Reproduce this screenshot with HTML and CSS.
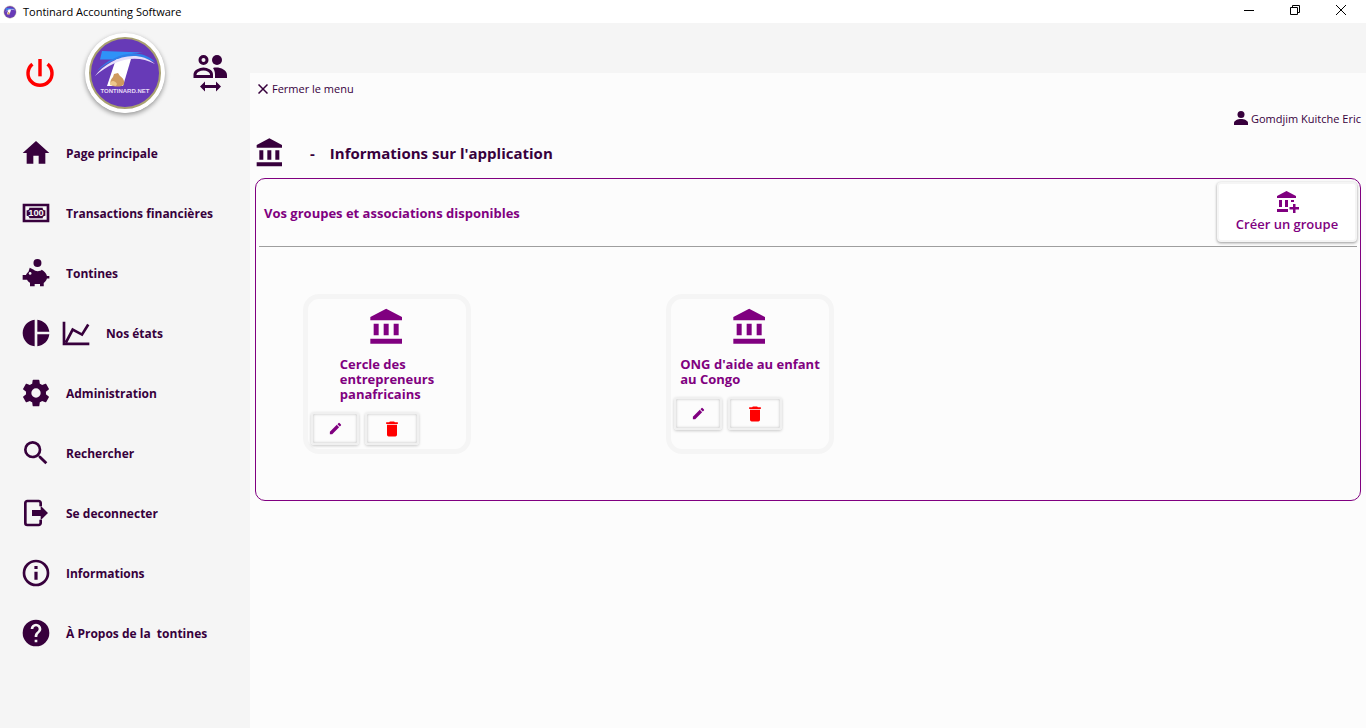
FILE: index.html
```
<!DOCTYPE html>
<html lang="fr">

<head>
    <meta charset="UTF-8">
    <meta name="viewport" content="width=device-width, initial-scale=1.0">
    <title>Tontinard Accounting Software</title>
    <link rel="stylesheet" href="styles.css">
</head>

<body>
    <!-- symboles partagés -->
    <svg class="symbols" aria-hidden="true">
        <symbol id="logo" viewBox="0 0 80 80">
            <circle cx="40" cy="40" r="40" fill="#fff" />
            <circle cx="40" cy="40" r="35" fill="#673ab7" stroke="#a8a070" stroke-width="2" />
            <path d="M17 18L58 19.500C49 20 40 22 32 26.500H15z" fill="#2f92f8" />
            <path d="M31 26h15l-8 27H22z" fill="#fff" />
            <path d="M12 38C26 22 54 13 70 29C52 20 30 22 12 38z" fill="#2f7fe8" />
            <path d="M10 43C22 27 50 14 70 31C50 20 28 27 10 43z" fill="#e6dffa" />
            <path d="M29 41l4-1 2 3c3 2 5 5 4 8-1 3-8 3-11 2-4-2-3-6 0-9z" fill="#cf9a5e" />
            <path d="M25 52c0-4 4-6 7-1l-1 2z" fill="#edc88c" />
        </symbol>
        <symbol id="bank" viewBox="0 0 24 24">
            <path d="M11.500 1L2 6v2h19V6zM16 10v7h3v-7zM2 22h19v-3H2zM10 10v7h3v-7zM4 10v7h3v-7z" />
        </symbol>
        <symbol id="pencil" viewBox="0 0 24 24">
            <path d="M3 17.250V21h3.750L17.810 9.940l-3.750-3.750zM20.710 7.040a1 1 0 0 0 0-1.410l-2.340-2.340a1 1 0 0 0-1.410 0l-1.830 1.830 3.750 3.750z" />
        </symbol>
        <symbol id="trash" viewBox="0 0 24 24">
            <path d="M6 19a2 2 0 0 0 2 2h8a2 2 0 0 0 2-2V7H6zM19 4h-3.500l-1-1h-5l-1 1H5v2h14z" />
        </symbol>
    </svg>

    <header class="titlebar">
        <svg class="titlebar-logo"><use href="#logo" /></svg>
        <span class="titlebar-name">Tontinard Accounting Software</span>
        <div class="window-btns">
            <button aria-label="Réduire"><svg viewBox="0 0 12 12"><path d="M1 6.500h10" /></svg></button>
            <button aria-label="Restaurer"><svg viewBox="0 0 12 12"><path d="M1.500 3.500h7v7h-7zM3.500 3V1.500h7v7H9" /></svg></button>
            <button aria-label="Fermer"><svg viewBox="0 0 12 12"><path d="M1 1l10 10M11 1L1 11" /></svg></button>
        </div>
    </header>

    <div class="app">
        <aside class="sidebar">
            <div class="brand">
                <button class="power" aria-label="Quitter">
                    <svg viewBox="0 0 24 24"><path d="M10.700 1.500h2.600v13h-2.600z" /><path d="M6.300 5.300a9 9 0 1 0 11.400 0" fill="none" stroke="red" stroke-width="2.600" /></svg>
                </button>
                <svg class="brand-logo" viewBox="0 0 80 80">
                    <use href="#logo" />
                    <text x="40" y="60" text-anchor="middle" class="logo-text">TONTINARD.NET</text>
                </svg>
                <button class="switch" aria-label="Changer de groupe">
                    <svg viewBox="0 0 34 38">
                        <circle cx="10.500" cy="6" r="3.500" fill="none" stroke="#37003c" stroke-width="3" />
                        <circle cx="24" cy="6" r="5" />
                        <path d="M2 22.500v-2c0-3.500 5-5.500 8.500-5.500s8 2 8 5.500v2z" fill="none" stroke="#37003c" stroke-width="3" />
                        <path d="M20 14c5-1.500 14 1 14 7v3H22v-3.500c0-3-1-5-2-6.500z" />
                        <path d="M7 32.500l5-5v3.500h11v-3.500l5 5-5 5V34H12v3.500z" />
                    </svg>
                </button>
            </div>

            <nav class="menu">
                <a href="#">
                    <svg viewBox="0 0 24 24"><path d="M10 20v-6h4v6h5v-8h3L12 3 2 12h3v8z" /></svg>
                    Page principale
                </a>
                <a href="#">
                    <svg viewBox="0 0 24 24">
                        <path d="M2 5h20v14H2zM4 7v10h16V7z" fill-rule="evenodd" />
                        <path d="M7 8h10a2 2 0 0 0 2 2v4a2 2 0 0 0-2 2H7a2 2 0 0 0-2-2v-4a2 2 0 0 0 2-2z" />
                        <text x="12" y="14.500" text-anchor="middle" class="bill-text">100</text>
                    </svg>
                    Transactions financières
                </a>
                <a href="#">
                    <svg viewBox="0 0 24 24">
                        <circle cx="13.100" cy="4.500" r="3" />
                        <path d="M7.300 8l3 1.600c.8 1.300 4.800 1.600 6 0 2 1 3.400 2.700 3.900 4.700H22v1.800h-1.800c-.5 1.500-1.200 2.500-2.400 3.400V22H15v-1.800h-4V22H7.500v-2.700c-1-.6-1.700-1.300-2.200-2.300H2v-3.500h2.500c.4-1 1-1.600 1.800-2.200z" />
                        <circle cx="7.600" cy="12.300" r="1" fill="#f5f5f5" />
                    </svg>
                    Tontines
                </a>
                <a href="#">
                    <svg viewBox="0 0 24 24"><path d="M11 2v20C5.900 21.500 2 17.200 2 12S5.900 2.500 11 2zM13 2v9h9c-.5-4.800-4.200-8.500-9-9zM13 13v9c4.700-.5 8.500-4.200 9-9z" /></svg>
                    <svg viewBox="0 0 24 24" class="second"><path d="M3 3.500V20.200H22M4.500 19L9.500 9.500l7 3.700L21.200 5.600" fill="none" stroke="#37003c" stroke-width="2" /></svg>
                    Nos états
                </a>
                <a href="#">
                    <svg viewBox="0 0 24 24"><path d="M12 15.500a3.500 3.500 0 1 1 0-7 3.500 3.500 0 0 1 0 7m7.430-2.530c.04-.32.07-.64.07-.97s-.03-.66-.07-1l2.110-1.630c.19-.15.24-.42.12-.64l-2-3.460c-.12-.22-.39-.31-.61-.22l-2.490 1c-.52-.39-1.060-.73-1.690-.98l-.37-2.650A.5.5 0 0 0 14 2h-4c-.25 0-.46.18-.5.42l-.37 2.650c-.63.25-1.170.59-1.690.98l-2.490-1c-.22-.09-.49 0-.61.22l-2 3.460c-.13.22-.07.49.12.64L4.570 11c-.04.34-.07.67-.07 1s.03.65.07.97l-2.110 1.660c-.19.15-.25.42-.12.64l2 3.460c.12.22.39.3.61.22l2.490-1.010c.52.4 1.060.74 1.690.99l.37 2.650c.04.24.25.42.5.42h4c.25 0 .46-.18.5-.42l.37-2.650c.63-.26 1.170-.59 1.690-.99l2.490 1.010c.22.08.49 0 .61-.22l2-3.460c.12-.22.07-.49-.12-.64z" /></svg>
                    Administration
                </a>
                <a href="#">
                    <svg viewBox="0 0 24 24"><path d="M15.500 14h-.79l-.28-.27A6.470 6.470 0 0 0 16 9.500 6.500 6.500 0 1 0 9.500 16c1.610 0 3.090-.59 4.230-1.570l.27.28v.79l5 4.990L20.490 19zm-6 0a4.500 4.500 0 1 1 0-9 4.500 4.500 0 0 1 0 9z" /></svg>
                    Rechercher
                </a>
                <a href="#">
                    <svg viewBox="0 0 24 24"><path d="M15.500 7V4.500A1.500 1.500 0 0 0 14 3H5.500A1.500 1.500 0 0 0 4 4.500v15A1.500 1.500 0 0 0 5.500 21H14a1.500 1.500 0 0 0 1.500-1.500V17" fill="none" stroke="#37003c" stroke-width="2" /><path d="M9 9.700h6.500V6.500L21 12l-5.500 5.500v-3.200H9z" /></svg>
                    Se deconnecter
                </a>
                <a href="#">
                    <svg viewBox="0 0 24 24"><path d="M10.800 17h2.400v-6h-2.400zM12 2a10 10 0 1 0 0 20 10 10 0 0 0 0-20zm0 18a8 8 0 1 1 0-16 8 8 0 0 1 0 16zM10.800 9h2.400V6.800h-2.400z" /></svg>
                    Informations
                </a>
                <a href="#">
                    <svg viewBox="0 0 24 24"><path d="M12 2a10 10 0 1 0 0 20 10 10 0 0 0 0-20zm1 17h-2v-2h2zm2.070-7.750l-.9.920C13.450 12.900 13 13.500 13 15h-2v-.5c0-1.100.45-2.100 1.170-2.830l1.240-1.260A2 2 0 1 0 10 9H8a4 4 0 1 1 8 0c0 .88-.36 1.680-.93 2.250z" /></svg>
                    À Propos de la&nbsp; tontines
                </a>
            </nav>
        </aside>

        <main class="content">
            <button class="close-menu">
                <svg viewBox="0 0 10 10"><path d="M.5.5l9 9M9.500.5l-9 9" /></svg>
                Fermer le menu
            </button>
            <div class="user">
                <svg viewBox="0 0 14 14"><circle cx="7" cy="3.500" r="3.500" /><path d="M0 14v-2c0-2.500 4-4 7-4s7 1.500 7 4v2z" /></svg>
                Gomdjim Kuitche Eric
            </div>

            <h1 class="page-title">
                <svg><use href="#bank" /></svg>
                <span class="dash">-</span>
                Informations sur l'application
            </h1>

            <section class="panel">
                <div class="panel-head">
                    <h2>Vos groupes et associations disponibles</h2>
                    <button class="create">
                        <svg viewBox="0 0 24 24"><path d="M11.500 1L2 6v2h19V6zM4 10v7h3v-7zM10 10v7h3v-7zM16 10v2h3v-2zM2 19v3h11v-3zM18 14h2.500v3H24v2.500h-3.500V23H18v-3.500h-3.500V17H18z" /></svg>
                        Créer un groupe
                    </button>
                </div>

                <div class="groups">
                    <article class="card">
                        <svg class="card-icon"><use href="#bank" /></svg>
                        <h3>Cercle des<br>entrepreneurs<br>panafricains</h3>
                        <div class="card-btns">
                            <button class="edit" aria-label="Modifier"><svg><use href="#pencil" /></svg></button>
                            <button class="delete" aria-label="Supprimer"><svg><use href="#trash" /></svg></button>
                        </div>
                    </article>
                    <article class="card">
                        <svg class="card-icon"><use href="#bank" /></svg>
                        <h3>ONG d'aide au enfant<br>au Congo</h3>
                        <div class="card-btns">
                            <button class="edit" aria-label="Modifier"><svg><use href="#pencil" /></svg></button>
                            <button class="delete" aria-label="Supprimer"><svg><use href="#trash" /></svg></button>
                        </div>
                    </article>
                </div>
            </section>
        </main>
    </div>
</body>

</html>
```
FILE: styles.css
```
* {
    margin: 0;
    padding: 0;
    box-sizing: border-box;
}

body {
    min-height: 100vh;
    display: flex;
    flex-direction: column;
    font-family: "Open Sans", "Noto Sans", sans-serif;
    font-size: 12px;
    color: #37003c;
    background-color: #f5f5f5;
}

button {
    border: 0;
    background: none;
    font-family: inherit;
    font-size: inherit;
    color: inherit;
    cursor: pointer;
}

svg {
    display: block;
    flex-shrink: 0;
    fill: currentColor;
}

.symbols {
    position: absolute;
    width: 0;
    height: 0;
}

.logo-text {
    font-family: "Liberation Sans", sans-serif;
    font-size: 6px;
    font-weight: bold;
    fill: #e6dcf5;
}

.bill-text {
    font-family: "Liberation Sans", sans-serif;
    font-size: 7px;
    font-weight: bold;
    fill: #f5f5f5;
}

/* barre de titre */
.titlebar {
    height: 23px;
    display: flex;
    align-items: center;
    padding: 0 2px 0 3px;
    background-color: #fff;
    color: #000;
}

.titlebar-logo {
    width: 14px;
    height: 14px;
    margin-right: 6px;
}

.titlebar-name {
    font-size: 11px;
}

.window-btns {
    margin-left: auto;
    display: flex;
}

.window-btns button {
    width: 46px;
    height: 23px;
    display: flex;
    justify-content: center;
    align-items: center;
    padding-bottom: 3px;
}

.window-btns svg {
    width: 12px;
    height: 12px;
    fill: none;
    stroke: #000;
}

.app {
    flex: 1;
    display: flex;
}

/* menu de gauche */
.sidebar {
    width: 250px;
    flex-shrink: 0;
}

.brand {
    display: flex;
    align-items: center;
    justify-content: space-between;
    height: 100px;
    padding: 0 23px 0 24px;
}

.power {
    color: red;
}

.power svg {
    width: 32px;
    height: 32px;
}

.brand-logo {
    width: 80px;
    height: 80px;
    border-radius: 50%;
    box-shadow: 0 2px 5px rgba(0, 0, 0, 0.4);
}

.switch svg {
    width: 34px;
    height: 38px;
}

.menu a {
    height: 60px;
    display: flex;
    align-items: center;
    gap: 14px;
    padding-left: 20px;
    color: inherit;
    font-weight: bold;
    text-decoration: none;
}

.menu svg {
    width: 32px;
    height: 32px;
}

.menu .second {
    margin-left: -6px;
}

/* contenu */
.content {
    flex: 1;
    margin-top: 50px;
    padding: 0 5px;
    background-color: #fcfcfc;
}

.close-menu {
    display: flex;
    align-items: center;
    gap: 4px;
    height: 31px;
    padding-left: 3px;
    font-size: 11px;
}

.close-menu svg {
    width: 10px;
    height: 10px;
    stroke: currentColor;
    stroke-width: 1.5;
}

.user {
    display: flex;
    align-items: center;
    justify-content: flex-end;
    gap: 3px;
    height: 28px;
    font-size: 11px;
}

.user svg {
    width: 14px;
    height: 14px;
}

.page-title {
    display: flex;
    align-items: center;
    height: 46px;
    padding-bottom: 4px;
    font-size: 15px;
}

.page-title svg {
    width: 32px;
    height: 32px;
    margin-left: -1px;
}

.dash {
    margin: 0 15px 0 24px;
}

.panel {
    min-height: 323px;
    padding: 3px;
    border: 1px solid purple;
    border-radius: 10px;
    color: purple;
}

.panel-head {
    display: flex;
    align-items: center;
    justify-content: space-between;
    height: 65px;
    padding: 0 0 4px 5px;
    border-bottom: 1px solid #9e9e9e;
}

.panel-head h2 {
    padding-top: 2px;
    font-size: 13px;
}

.create {
    display: flex;
    flex-direction: column;
    align-items: center;
    width: 140px;
    height: 60px;
    padding-top: 6px;
    border: 2px solid #f5f5f5;
    border-radius: 4px;
    background-color: #fff;
    box-shadow: 0 1px 3px rgba(0, 0, 0, 0.4);
    font-size: 13px;
    font-weight: 600;
    line-height: 20px;
}

.create svg {
    width: 24px;
    height: 24px;
}

.groups {
    display: grid;
    grid-template-columns: repeat(auto-fill, 168px);
    gap: 40px 195px;
    padding: 47px 44px 43px;
}

.card {
    min-height: 160px;
    padding: 8px 3px 3px;
    border: 5px solid #f5f5f5;
    border-radius: 16px;
    display: flex;
    flex-direction: column;
    align-items: center;
}

.card-icon {
    width: 40px;
    height: 40px;
}

.card h3 {
    margin: 10px 0;
    font-size: 13px;
    line-height: 15px;
    white-space: nowrap;
}

.card-btns {
    align-self: flex-start;
    display: flex;
    gap: 6px;
}

.card-btns button {
    height: 33px;
    display: flex;
    justify-content: center;
    align-items: center;
    border: 2px solid #f0f0f0;
    border-radius: 3px;
    box-shadow: 0 1px 3px rgba(0, 0, 0, 0.2), inset 0 0 3px rgba(0, 0, 0, 0.25);
}

.card-btns .edit {
    width: 48px;
    color: purple;
}

.edit svg {
    width: 15px;
    height: 15px;
}

.card-btns .delete {
    width: 54px;
    color: red;
}

.delete svg {
    width: 20px;
    height: 20px;
}
```
